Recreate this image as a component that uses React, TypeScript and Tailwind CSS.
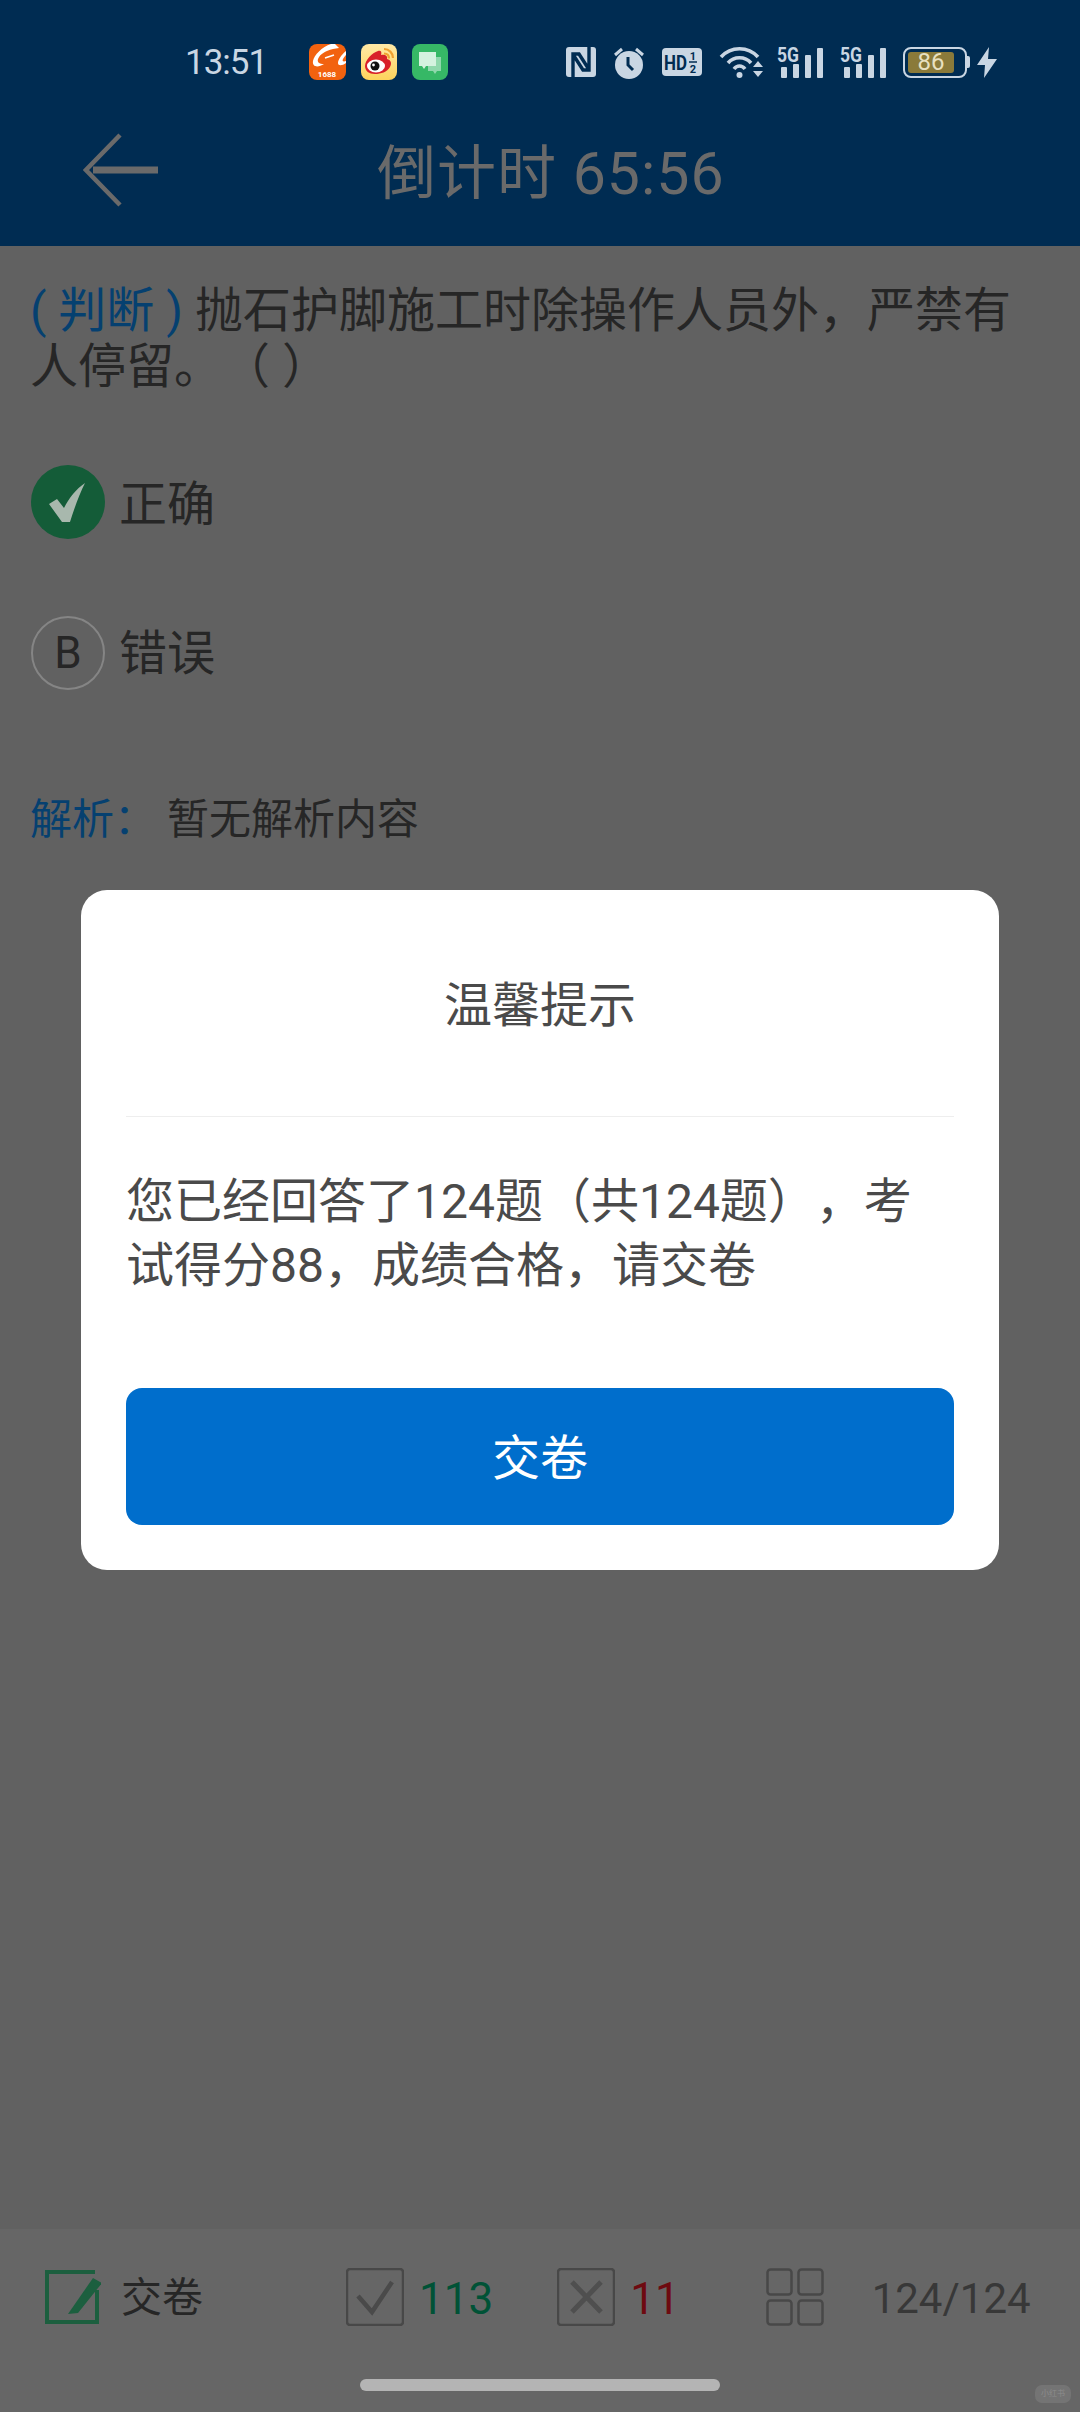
import React from 'react';

const FONT = "font-['Roboto','Noto_Sans_CJK_SC',sans-serif]";

const AppIcon1688 = () => (
  <svg width="37" height="36" viewBox="0 0 37 36" className="shrink-0">
    <rect width="37" height="36" rx="8" fill="#f2620f" />
    <path d="M22 0 C13 3 5 11 4 17 C3 23 9 24 15 20 C10 20 8 18 9 15 C11 10 16 7 24 5 L30 4 L26 0 Z" fill="#fff" />
    <path d="M16 14 L25 11" stroke="#fff" strokeWidth="1.5" />
    <path d="M37 7 C32 11 29 16 29 19 C29 22 33 22 37 19 L37 17 C34 18 33 17 34 15 C35 13 36 12 37 11 Z" fill="#fff" />
    <text x="18" y="33" textAnchor="middle" fontSize="8" fontWeight="700" fill="#fff" fontFamily="Roboto">1688</text>
  </svg>
);

const AppIconWeibo = () => (
  <svg width="36" height="36" viewBox="0 0 36 36" className="shrink-0">
    <defs>
      <linearGradient id="wb" x1="0" y1="0" x2="0" y2="1">
        <stop offset="0" stopColor="#ffe9a6" />
        <stop offset="1" stopColor="#fdd35c" />
      </linearGradient>
    </defs>
    <rect width="36" height="36" rx="8" fill="url(#wb)" />
    <path d="M4 22 C4 16 11 9 17 7 C20 6 21 8 20 11 C24 10 27 12 26 15 C30 16 31 19 29 23 C26 28 20 30 14 30 C8 30 4 27 4 22 Z" fill="#d8202a" />
    <ellipse cx="15" cy="22" rx="9" ry="6.5" fill="#fff" />
    <circle cx="14" cy="22" r="4.5" fill="#111" />
    <circle cx="12.5" cy="21" r="1.4" fill="#fff" />
    <path d="M23 5 C28 5 32 9 32 14" fill="none" stroke="#f0a030" strokeWidth="2.2" />
    <path d="M23 9.5 C26 9.5 28 11.5 28 14.5" fill="none" stroke="#f0a030" strokeWidth="2.2" />
  </svg>
);

const AppIconMessages = () => (
  <svg width="36" height="36" viewBox="0 0 36 36" className="shrink-0">
    <rect width="36" height="36" rx="8" fill="#36b866" />
    <path d="M16 13 H29 V27 H25 L23 30 L21 27 H16 Z" fill="#8fd8ac" />
    <path d="M7 8 H24 V22 H14 L12 25 L10 22 H7 Z" fill="#d4f2df" />
  </svg>
);

const NfcIcon = () => (
  <svg width="30" height="30" viewBox="0 0 30 30" className="shrink-0">
    <rect width="30" height="30" rx="3" fill="#c9d6e3" />
    <path d="M7 30 V7 H13 L22 21 M23 0 V23 H17 L8 9" fill="none" stroke="#002c52" strokeWidth="3.4" />
  </svg>
);

const AlarmIcon = () => (
  <svg width="32" height="33" viewBox="0 0 32 33" className="shrink-0">
    <circle cx="16" cy="19" r="14" fill="#c9d6e3" />
    <path d="M2 9 L9 3 M30 9 L23 3" stroke="#c9d6e3" strokeWidth="3" />
    <path d="M15 11 V19 L20 24" fill="none" stroke="#002c52" strokeWidth="3" />
  </svg>
);

const HdIcon = () => (
  <svg width="40" height="28" viewBox="0 0 40 28" className="shrink-0">
    <rect width="40" height="28" rx="4" fill="#c9d6e3" />
    <text x="2" y="22" fontSize="21" fontWeight="700" fill="#002c52" fontFamily="Roboto" textLength="23" lengthAdjust="spacingAndGlyphs">HD</text>
    <text x="31" y="12" fontSize="11" fontWeight="700" fill="#002c52" fontFamily="Roboto" textAnchor="middle">1</text>
    <text x="31" y="25" fontSize="11" fontWeight="700" fill="#002c52" fontFamily="Roboto" textAnchor="middle">2</text>
    <path d="M27 14 H35" stroke="#002c52" strokeWidth="1.5" />
  </svg>
);

const WifiIcon = () => (
  <svg width="45" height="34" viewBox="0 0 45 34" className="shrink-0">
    <path d="M2 12 C12 1 29 1 39 12" fill="none" stroke="#c9d6e3" strokeWidth="3.6" />
    <path d="M9 18 C15 11 26 11 32 18" fill="none" stroke="#c9d6e3" strokeWidth="3.6" />
    <path d="M15 24 C18 20 23 20 26 24" fill="none" stroke="#c9d6e3" strokeWidth="3.6" />
    <circle cx="20.5" cy="30" r="3" fill="#c9d6e3" />
    <path d="M34 22 L39 16 L44 22 Z M34 26 H44 L39 32 Z" fill="#c9d6e3" />
  </svg>
);

const SignalIcon = () => (
  <svg width="46" height="33" viewBox="0 0 46 33" className="shrink-0 overflow-visible">
    <text x="0" y="16" fontSize="20" fontWeight="700" fill="#c9d6e3" fontFamily="Roboto" textLength="22" lengthAdjust="spacingAndGlyphs">5G</text>
    <rect x="4" y="21" width="6" height="11" rx="1" fill="#c9d6e3" />
    <rect x="16" y="18" width="6" height="14" rx="1" fill="#c9d6e3" />
    <rect x="28" y="9" width="6" height="23" rx="1" fill="#c9d6e3" />
    <rect x="40" y="2" width="6" height="30" rx="1" fill="#c9d6e3" />
  </svg>
);

const Battery = () => (
  <div className="flex items-center shrink-0">
    <div className="w-[64px] h-[31px] rounded-[8px] border-[2px] border-[#c9d6e3] p-[3px] flex">
      <div className="w-[46px] h-full bg-[#8a7a3a] rounded-[3px] flex items-center justify-center text-[24px] leading-none text-[#e8e0c0]">86</div>
    </div>
    <div className="w-[3px] h-[12px] bg-[#c9d6e3] rounded-r-[2px]" />
  </div>
);

const BoltIcon = () => (
  <svg width="20" height="31" viewBox="0 0 20 31" className="shrink-0">
    <path d="M12 0 L0 18 H8 L7 31 L20 12 H11 Z" fill="#c9d6e3" />
  </svg>
);

const SubmitIcon = () => (
  <svg width="56" height="54" viewBox="0 0 56 54" className="shrink-0">
    <path d="M50 2 H2 V52 H52 V20" fill="none" stroke="#1c5f3f" strokeWidth="4" />
    <path d="M48 8 L57 13 L33 43 L23 44 Z" fill="#1c5f3f" />
  </svg>
);

const MarkBox = ({ kind }: { kind: 'check' | 'cross' }) => (
  <svg width="58" height="58" viewBox="0 0 58 58" className="shrink-0">
    <rect x="1" y="1" width="56" height="56" rx="3" fill="none" stroke="#484848" strokeWidth="2.5" />
    {kind === 'check' ? (
      <path d="M12 28 L26 44 L46 14" fill="none" stroke="#4a4a4a" strokeWidth="4.5" />
    ) : (
      <path d="M15 14 L44 44 M44 14 L15 44" fill="none" stroke="#4f4f4f" strokeWidth="5" />
    )}
  </svg>
);

const GridIcon = () => (
  <svg width="58" height="58" viewBox="0 0 58 58" className="shrink-0">
    <g fill="none" stroke="#484848" strokeWidth="2.5">
      <rect x="1.5" y="1.5" width="24" height="25" rx="3" />
      <rect x="32.5" y="1.5" width="24" height="25" rx="3" />
      <rect x="1.5" y="32.5" width="24" height="24" rx="3" />
      <rect x="32.5" y="32.5" width="24" height="24" rx="3" />
    </g>
  </svg>
);

export default function App() {
  return (
    <div className={`relative w-[1080px] h-[2412px] overflow-hidden flex flex-col bg-[#616161] [text-spacing-trim:space-all] ${FONT}`}>
      {/* Header */}
      <header className="h-[246px] shrink-0 bg-[#002c52] flex flex-col">
        <div className="mt-[44px] h-[36px] flex items-center pl-[185px] pr-[83px]">
          <span className="text-[35px] leading-none text-[#c9d6e3] w-[77px] tracking-[-1px] whitespace-nowrap">13:51</span>
          <div className="ml-[47px] flex items-center gap-[15px]">
            <AppIcon1688 />
            <AppIconWeibo />
            <AppIconMessages />
          </div>
          <div className="ml-auto flex items-center gap-[17px]">
            <NfcIcon />
            <AlarmIcon />
            <HdIcon />
            <WifiIcon />
            <div className="-ml-[4px]"><SignalIcon /></div>
            <SignalIcon />
            <Battery />
            <div className="-ml-[10px]"><BoltIcon /></div>
          </div>
        </div>
        <div className="mt-[53px] h-[74px] flex items-center pl-[83px]">
          <svg width="75" height="74" viewBox="0 0 75 74" className="shrink-0">
            <path d="M37 2 L3 37 L37 72" fill="none" stroke="#6a6a6a" strokeWidth="4.5" />
            <path d="M10 37 H75" stroke="#6a6a6a" strokeWidth="7" />
          </svg>
          <h1 className="ml-[219px] pt-[7px] text-[59px] leading-none tracking-[1px] text-[#6a6a6a] font-normal whitespace-nowrap">倒计时 65:56</h1>
        </div>
      </header>

      {/* Question */}
      <main className="flex-1 px-[30px] pt-[37px] text-[#262626]">
        <p className="text-[48px] leading-[56px]">
          <span className="text-[#054070]">( 判断 ) </span>
          抛石护脚施工时除操作人员外，严禁有人停留。（ ）
        </p>
        <div className="mt-[70px] flex items-center">
          <div className="ml-[1px] w-[74px] h-[74px] rounded-full bg-[#145c38] flex items-center justify-center">
            <svg width="42" height="42" viewBox="0 0 42 42">
              <path d="M2 23 L10 18 L17 27 C22 17 29 8 38 2 C33 12 28 25 23 41 H15 Z" fill="#a8b8ad" />
            </svg>
          </div>
          <span className="ml-[14px] pt-[5px] text-[48px] leading-none">正确</span>
        </div>
        <div className="mt-[77px] flex items-center">
          <div className="ml-[1px] w-[74px] h-[74px] rounded-full border-[2px] border-[#858585] flex items-center justify-center text-[44px] leading-none">B</div>
          <span className="ml-[14px] pt-[2px] text-[48px] leading-none">错误</span>
        </div>
        <div className="mt-[109px] flex items-center text-[42px] leading-[42px]">
          <span className="w-[137px] text-[#054070]">解析：</span>
          <span>暂无解析内容</span>
        </div>
      </main>

      {/* Bottom toolbar */}
      <footer className="relative h-[183px] shrink-0 bg-[#666666]">
        <div className="mt-[39px] h-[58px] flex items-center pl-[45px]">
          <SubmitIcon />
          <span className="ml-[20px] pt-[3px] text-[41px] leading-none text-[#262626]">交卷</span>
          <div className="ml-[143px]"><MarkBox kind="check" /></div>
          <span className="ml-[15px] pt-[3px] text-[44px] leading-none text-[#005236]">113</span>
          <div className="ml-[64px]"><MarkBox kind="cross" /></div>
          <span className="ml-[15px] pt-[3px] text-[44px] leading-none text-[#6e0a10]">11</span>
          <div className="ml-[86px]"><GridIcon /></div>
          <span className="ml-[48px] pt-[3px] text-[42px] leading-none text-[#383838]">124/124</span>
        </div>
        <div className="absolute left-[360px] top-[150px] w-[360px] h-[12px] rounded-full bg-[#b4b4b4]" />
        <div className="absolute left-[1035px] top-[156px] w-[36px] h-[18px] rounded-[7px] bg-[#747474] flex items-center justify-center text-[8px] leading-none text-[#8c8c8c]">小红书</div>
      </footer>

      {/* Dialog over the dimmed page */}
      <div className="absolute left-[81px] top-[890px] w-[918px] h-[680px] rounded-[26px] bg-white px-[45px] flex flex-col">
        <div className="h-[227px] shrink-0 pt-[5px] flex items-center justify-center border-b border-[#eeeeee] text-[48px] leading-none text-[#4a4a4a]">温馨提示</div>
        <p className="mt-[53px] text-[48px] leading-[64px] text-[#4a4a4a]">您已经回答了124题（共124题），考试得分88，成绩合格，请交卷</p>
        <button className="mt-auto mb-[45px] h-[137px] pt-[5px] rounded-[16px] bg-[#006ecc] text-white text-[48px] leading-none">交卷</button>
      </div>
    </div>
  );
}
